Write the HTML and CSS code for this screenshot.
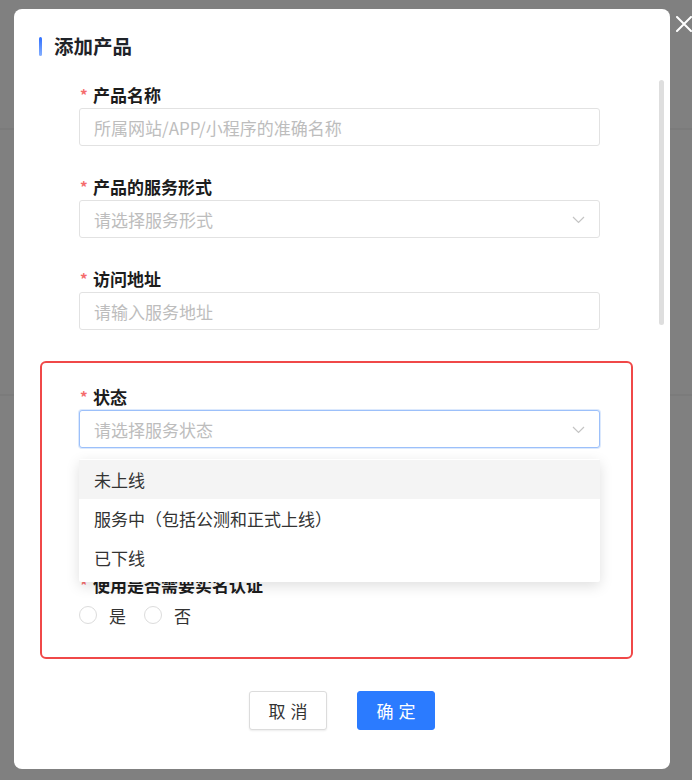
FILE: index.html
```html
<!DOCTYPE html>
<html lang="zh-CN">
<head>
<meta charset="utf-8">
<title>添加产品</title>
<link rel="stylesheet" href="styles.css">
</head>
<body>
<div class="backdrop">
  <div class="band band-a"></div>
  <div class="band band-b"></div>
  <div class="modal">
    <div class="modal-title"><span class="title-bar"></span>添加产品</div>
    <div class="form">
      <div class="field">
        <div class="label"><span class="req">*</span>产品名称</div>
        <div class="input"><span class="ph">所属网站/APP/小程序的准确名称</span></div>
      </div>
      <div class="field">
        <div class="label"><span class="req">*</span>产品的服务形式</div>
        <div class="input select"><span class="ph">请选择服务形式</span>
          <svg class="chev" width="13" height="8" viewBox="0 0 13 8"><path d="M1 1 L6.5 6.5 L12 1" fill="none" stroke="#c4c4c4" stroke-width="1.2"/></svg>
        </div>
      </div>
      <div class="field">
        <div class="label"><span class="req">*</span>访问地址</div>
        <div class="input"><span class="ph">请输入服务地址</span></div>
      </div>
      <div class="highlight">
        <div class="field">
          <div class="label"><span class="req">*</span>状态</div>
          <div class="input select focus"><span class="ph">请选择服务状态</span>
            <svg class="chev" width="13" height="8" viewBox="0 0 13 8"><path d="M1 1 L6.5 6.5 L12 1" fill="none" stroke="#c4c4c4" stroke-width="1.2"/></svg>
          </div>
          <div class="dropdown">
            <div class="opt hover">未上线</div>
            <div class="opt">服务中（包括公测和正式上线）</div>
            <div class="opt">已下线</div>
          </div>
        </div>
        <div class="field spacer"></div>
        <div class="field last">
          <div class="label"><span class="req">*</span>使用是否需要实名认证</div>
          <div class="radios">
            <span class="radio"><span class="circle"></span>是</span>
            <span class="radio"><span class="circle"></span>否</span>
          </div>
        </div>
      </div>
    </div>
    <div class="actions">
      <button class="btn btn-cancel">取消</button>
      <button class="btn btn-ok">确定</button>
    </div>
    <div class="scrollbar"></div>
  </div>
  <svg class="close" width="16" height="16" viewBox="0 0 16 16"><path d="M1 1 L15 15 M15 1 L1 15" stroke="#ffffff" stroke-width="2" stroke-linecap="round"/></svg>
</div>
</body>
</html>
```
FILE: styles.css
```css
* { box-sizing: border-box; }
html, body { margin: 0; padding: 0; }
body {
  background: #808080;
  font-family: "Noto Sans CJK SC", "Noto Sans", sans-serif;
  width: 692px;
  height: 780px;
  overflow: hidden;
}
.backdrop {
  position: relative;
  width: 692px;
  height: 780px;
  padding: 9px 22px 0 14px;
}
.band {
  position: absolute;
  left: 0;
  right: 0;
  height: 2px;
  background: #7b7b7b;
}
.band-a { top: 128px; }
.band-b { top: 394px; }
.modal {
  position: relative;
  width: 656px;
  height: 760px;
  background: #ffffff;
  border-radius: 8px;
  padding: 25px 0 0 25px;
}
.modal-title {
  display: flex;
  align-items: center;
  gap: 12px;
  font-size: 19.5px;
  font-weight: 700;
  color: #1f2329;
  height: 24px;
  line-height: 24px;
}
.title-bar {
  width: 3px;
  height: 19px;
  border-radius: 1.5px;
  background: linear-gradient(180deg, #2f6fff 0%, #86b0ff 100%);
}
.form {
  padding: 27px 0 0 40px;
  width: 586px;
}
.field {
  position: relative;
  width: 521px;
  margin-bottom: 31px;
}
.field.spacer { height: 65px; }
.label {
  height: 20px;
  line-height: 20px;
  font-size: 17px;
  font-weight: 700;
  color: #1c1c1c;
  margin-bottom: 3px;
  display: flex;
  align-items: center;
}
.req {
  color: #f56c6c;
  font-weight: 700;
  font-size: 15px;
  width: 14px;
  padding-left: 1px;
}
.input {
  height: 38px;
  border: 1px solid #e2e2e2;
  border-radius: 3px;
  display: flex;
  align-items: center;
  justify-content: space-between;
  padding: 0 14px 0 14px;
  background: #fff;
}
.ph {
  color: #bdbdbd;
  font-size: 17px;
}
.chev { margin-top: 1px; }
.focus {
  border-color: #9cc0fa;
  box-shadow: 0 0 0 1px rgba(156, 192, 250, 0.35);
}
.highlight {
  margin-left: -39px;
  width: 593px;
  border: 2px solid #f04848;
  border-radius: 6px;
  padding: 24px 0 26px 37px;
}
.field.last { margin-bottom: 0; }
.dropdown {
  position: absolute;
  left: 0;
  top: 72px;
  width: 521px;
  background: #fff;
  padding: 1px 0 5px;
  box-shadow: 0 4px 14px rgba(0, 0, 0, 0.13);
  border-radius: 2px;
  z-index: 5;
}
.opt {
  height: 39px;
  line-height: 39px;
  padding-left: 15px;
  font-size: 17px;
  color: #333;
}
.opt.hover { background: #f4f4f4; }
.radios {
  display: flex;
  align-items: center;
  gap: 18px;
  height: 32px;
  margin-top: 4px;
  font-size: 17px;
  color: #333;
}
.radio {
  display: flex;
  align-items: center;
  gap: 12px;
}
.circle {
  width: 18px;
  height: 18px;
  border: 1px solid #dcdcdc;
  border-radius: 50%;
}
.actions {
  display: flex;
  justify-content: center;
  gap: 30px;
  margin-top: 32px;
  padding-right: 25px;
}
.btn {
  width: 78px;
  height: 39px;
  border-radius: 3px;
  font-family: "Noto Sans CJK SC", sans-serif;
  font-size: 17px;
  letter-spacing: 5px;
  padding: 0 0 0 5px;
  cursor: pointer;
}
.btn-cancel {
  background: #fff;
  border: 1px solid #dcdcdc;
  color: #333;
  box-shadow: 0 1px 2px rgba(0,0,0,0.08);
}
.btn-ok {
  background: #2b7bff;
  border: 1px solid #2b7bff;
  color: #fff;
}
.scrollbar {
  position: absolute;
  left: 645px;
  top: 71px;
  width: 5px;
  height: 245px;
  border-radius: 3px;
  background: #dedede;
}
.close {
  position: absolute;
  left: 676px;
  top: 16px;
}
```
